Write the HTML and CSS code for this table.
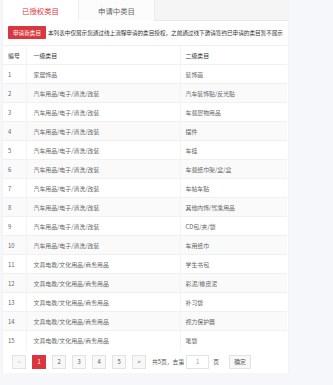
FILE: index.html
```html
<!DOCTYPE html>
<html lang="zh">
<head>
<meta charset="utf-8">
<link rel="stylesheet" href="styles.css">
</head>
<body>
<div class="panel">
  <div class="tabs">
    <div class="tab active">已授权类目</div>
    <div class="tab">申请中类目</div>
  </div>
  <div class="notice">
    <span class="btn-red">申请新类目</span>
    <span class="notice-text">本列表中仅展示您通过线上流程申请的类目授权，之前通过线下邀请签约已申请的类目暂不展示</span>
  </div>
  <table class="grid">
    <colgroup><col class="c1"><col class="c2"><col class="c3"></colgroup>
    <thead>
      <tr><th>编号</th><th>一级类目</th><th>二级类目</th></tr>
    </thead>
    <tbody>
      <tr><td>1</td><td>家居饰品</td><td>装饰画</td></tr>
      <tr><td>2</td><td>汽车用品/电子/清洗/改装</td><td>汽车装饰贴/反光贴</td></tr>
      <tr><td>3</td><td>汽车用品/电子/清洗/改装</td><td>车载层物用品</td></tr>
      <tr><td>4</td><td>汽车用品/电子/清洗/改装</td><td>摆件</td></tr>
      <tr><td>5</td><td>汽车用品/电子/清洗/改装</td><td>车挂</td></tr>
      <tr><td>6</td><td>汽车用品/电子/清洗/改装</td><td>车载纸巾架/盒/盒</td></tr>
      <tr><td>7</td><td>汽车用品/电子/清洗/改装</td><td>车帖车贴</td></tr>
      <tr><td>8</td><td>汽车用品/电子/清洗/改装</td><td>其他内饰/驾乘用品</td></tr>
      <tr><td>9</td><td>汽车用品/电子/清洗/改装</td><td>CD包/夹/袋</td></tr>
      <tr><td>10</td><td>汽车用品/电子/清洗/改装</td><td>车用纸巾</td></tr>
      <tr><td>11</td><td>文具电教/文化用品/商务用品</td><td>学生书包</td></tr>
      <tr><td>12</td><td>文具电教/文化用品/商务用品</td><td>彩泥/橡皮泥</td></tr>
      <tr><td>13</td><td>文具电教/文化用品/商务用品</td><td>补习袋</td></tr>
      <tr><td>14</td><td>文具电教/文化用品/商务用品</td><td>视力保护器</td></tr>
      <tr><td>15</td><td>文具电教/文化用品/商务用品</td><td>笔袋</td></tr>
    </tbody>
  </table>
  <div class="pager">
    <span class="pg disabled">&lt;</span>
    <span class="pg current">1</span>
    <span class="pg">2</span>
    <span class="pg">3</span>
    <span class="pg">4</span>
    <span class="pg">5</span>
    <span class="pg">&gt;</span>
    <span class="pg-text">共5页，去第</span>
    <span class="pg-input">1</span>
    <span class="pg-text">页</span>
    <span class="pg-ok">确定</span>
  </div>
</div>
</body>
</html>
```

FILE: styles.css
```css
* { box-sizing: border-box; }
html, body {
  margin: 0;
  padding: 0;
  background: #f6f7fb;
  font-family: "Noto Sans CJK SC", "Noto Sans", sans-serif;
}
.panel {
  margin-left: 3px;
  width: 285px;
  height: 373px;
  background: #fff;
  box-shadow: 0 0 2px rgba(0,0,0,0.06);
}
.tabs {
  display: flex;
  height: 21px;
  background: #f5f5f5;
  border-bottom: 1px solid #e8e8e8;
}
.tab {
  width: 76px;
  height: 21px;
  display: flex;
  align-items: center;
  justify-content: center;
  font-size: 7.4px;
  color: #666;
  background: #fcfcfc;
  border-right: 1px solid #ececec;
}
.tab.active {
  color: #d9363e;
  background: #fff;
}
.notice {
  display: flex;
  align-items: center;
  gap: 2px;
  padding: 5px 0 6px 5px;
  white-space: nowrap;
}
.btn-red {
  display: inline-flex;
  align-items: center;
  justify-content: center;
  width: 38px;
  height: 13px;
  background: #d9363e;
  color: #fff;
  font-size: 5.6px;
  border-radius: 1px;
}
.notice-text {
  font-size: 5.6px;
  color: #333;
}
.grid {
  width: 284px;
  border-collapse: collapse;
  table-layout: fixed;
  font-size: 5.9px;
  color: #666;
}
.c1 { width: 23px; }
.c2 { width: 154px; }
.c3 { width: 107px; }
.grid th, .grid td {
  height: 19px;
  padding: 0 0 0 5px;
  text-align: left;
  border-top: 1px solid #f0f0f0;
  border-left: 1px solid #f3f3f3;
  white-space: nowrap;
}
.grid th:first-child, .grid td:first-child { border-left: none; }
.grid th {
  font-weight: normal;
  color: #333;
}
.grid td:nth-child(2), .grid th:nth-child(2) { padding-left: 7px; }
.grid tbody tr:nth-child(even) td { background: #fafafa; }
.pager {
  display: flex;
  align-items: center;
  padding: 5px 0 0 9px;
  font-size: 5.8px;
  color: #555;
}
.pg {
  width: 14px;
  height: 14px;
  margin-right: 6px;
  display: inline-flex;
  align-items: center;
  justify-content: center;
  border: 1px solid #e3e3e3;
  background: #f8f8f8;
  color: #555;
}
.pg.disabled { color: #bbb; }
.pg.current {
  background: #d9363e;
  border-color: #d9363e;
  color: #fff;
}
.pg-text { color: #555; }
.pg-input {
  width: 23px;
  height: 14px;
  margin: 0 4px 0 2px;
  display: inline-flex;
  align-items: center;
  justify-content: center;
  border: 1px solid #e3e3e3;
  color: #999;
}
.pg-ok {
  width: 22px;
  height: 14px;
  margin-left: 10px;
  display: inline-flex;
  align-items: center;
  justify-content: center;
  border: 1px solid #e3e3e3;
  background: #f8f8f8;
  color: #555;
}
```
